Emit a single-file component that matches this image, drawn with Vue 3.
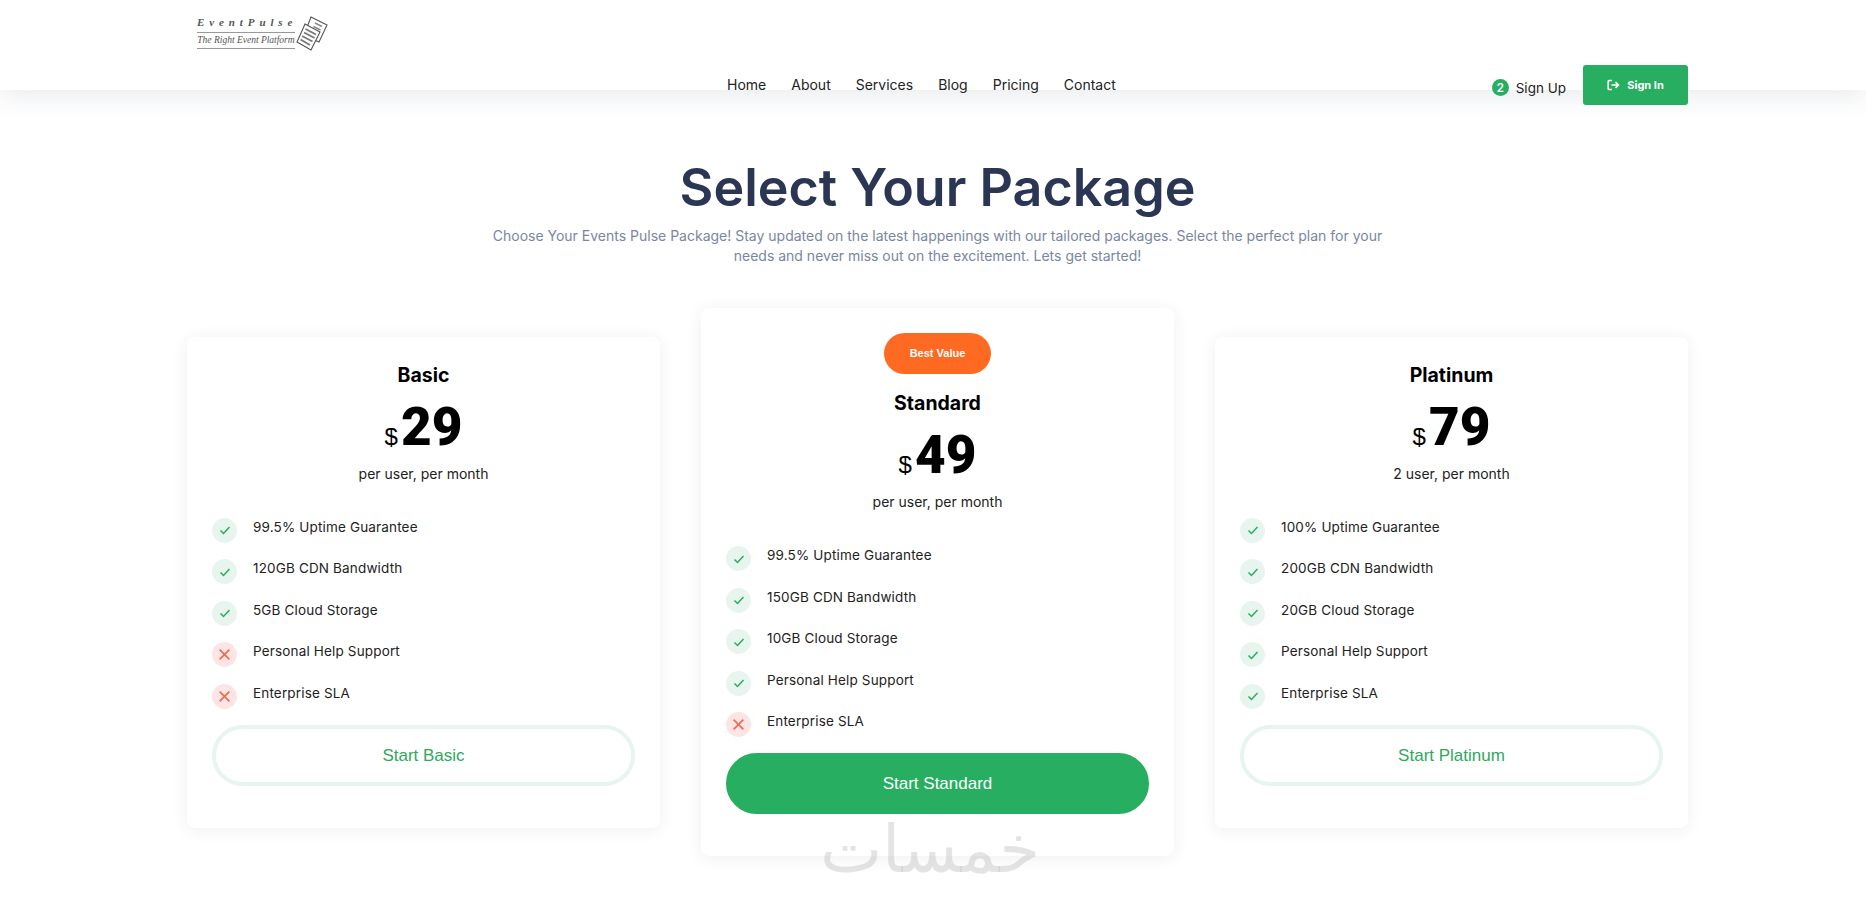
<template>
  <div class="page">
    <header class="site-header">
      <div class="header-inner">
        <a class="logo" href="#">
          <div class="logo-text">
            <div class="logo-name">EventPulse</div>
            <div class="logo-tag">The Right Event Platform</div>
          </div>
          <svg class="logo-tickets" viewBox="0 0 32 36" fill="none" stroke="#555" stroke-width="1.1">
            <path d="M15 2 31 10 23 27 8 20z" fill="#fff" />
            <path d="M19 8l7 3.500M17.500 11.500l7 3.500" stroke="#888" stroke-width="1.500" />
            <path d="M9 9 24 17 15 35 1 27z" fill="#fff" />
            <path d="M9.500 14 20 19.500M8 17.500 18.500 23M6 21l10.500 5.500M4.500 24.500 14 30" stroke="#777" stroke-width="1.700" />
          </svg>
        </a>
        <nav class="main-nav">
          <a v-for="link in links" :key="link" href="#">{{ link }}</a>
        </nav>
        <div class="account">
          <a class="sign-up" href="#"><span class="step">2</span>Sign Up</a>
          <a class="sign-in" href="#">
            <svg viewBox="0 0 16 14" width="13" height="12" fill="none" stroke="#fff" stroke-width="2">
              <path d="M6 1.500H2.500a1 1 0 0 0-1 1v9a1 1 0 0 0 1 1H6" />
              <path d="M5.500 7H14M10.500 3.500 14 7l-3.500 3.500" />
            </svg>
            Sign In
          </a>
        </div>
      </div>
    </header>

    <main class="pricing">
      <h1>Select Your Package</h1>
      <p class="intro">
        Choose Your Events Pulse Package! Stay updated on the latest happenings with our tailored packages. Select the perfect plan for your needs and never miss out on the excitement. Lets get started!
      </p>

      <div class="plans">
        <article v-for="plan in plans" :key="plan.name" class="plan" :class="{ featured: plan.featured }">
          <span v-if="plan.featured" class="badge">Best Value</span>
          <h2>{{ plan.name }}</h2>
          <div class="price"><span class="currency">$</span>{{ plan.price }}</div>
          <p class="period">{{ plan.period }}</p>
          <ul>
            <li v-for="item in plan.items" :key="item.label">
              <span class="mark" :class="item.on ? 'yes' : 'no'">
                <svg v-if="item.on" viewBox="0 0 12 12" width="12" height="12" fill="none" stroke="#27ae60" stroke-width="1.500">
                  <path d="M1.500 6.500 4.500 9.500 10.500 3" />
                </svg>
                <svg v-else viewBox="0 0 12 12" width="13" height="13" fill="none" stroke="#f4664a" stroke-width="1.400">
                  <path d="M1.500 1.500 10.500 10.500M10.500 1.500 1.500 10.500" />
                </svg>
              </span>
              {{ item.label }}
            </li>
          </ul>
          <a class="start" href="#">Start {{ plan.name }}</a>
        </article>
      </div>
    </main>

    <div class="watermark" lang="ar" dir="rtl">خمسات</div>
  </div>
</template>

<script setup>
const links = ['Home', 'About', 'Services', 'Blog', 'Pricing', 'Contact']

const features = (uptime, cdn, storage, on) => [
  { label: `${uptime} Uptime Guarantee`, on: true },
  { label: `${cdn} CDN Bandwidth`, on: true },
  { label: `${storage} Cloud Storage`, on: true },
  { label: 'Personal Help Support', on: on > 3 },
  { label: 'Enterprise SLA', on: on > 4 },
]

const plans = [
  { name: 'Basic', price: 29, period: 'per user, per month', items: features('99.5%', '120GB', '5GB', 3) },
  { name: 'Standard', price: 49, period: 'per user, per month', featured: true, items: features('99.5%', '150GB', '10GB', 4) },
  { name: 'Platinum', price: 79, period: '2 user, per month', items: features('100%', '200GB', '20GB', 5) },
]
</script>

<style>
html,
body {
  background: #fff;
}
</style>

<style scoped>
.page {
  position: relative;
  height: 901px;
  overflow: hidden;
  font-family: Inter, "Liberation Sans", sans-serif;
  color: #111;
}

a {
  color: inherit;
  text-decoration: none;
}

.site-header {
  height: 90px;
  padding-left: 9px;
  background: #fff;
  box-shadow: 0 6px 26px rgba(43, 54, 84, 0.1);
}

.header-inner {
  width: 1501px;
  margin: 0 auto;
  display: flex;
  align-items: flex-start;
}

.logo {
  width: 540px;
  padding: 12px 0 0 10px;
  display: flex;
  align-items: flex-start;
  box-sizing: border-box;
}

.logo-text {
  width: 98px;
}

.logo-name {
  font-family: "Liberation Serif", serif;
  font-style: italic;
  font-weight: 700;
  font-size: 11px;
  letter-spacing: 4.900px;
  line-height: 20px;
  color: #555;
  white-space: nowrap;
  border-bottom: 1px solid #999;
}

.logo-tag {
  font-family: "Liberation Serif", serif;
  font-style: italic;
  font-size: 9.500px;
  line-height: 15px;
  text-align: center;
  color: #555;
  white-space: nowrap;
  border-bottom: 1px solid #999;
}

.logo-tickets {
  width: 32px;
  height: 36px;
  margin: 3px 0 0 1px;
}

.main-nav {
  display: flex;
  gap: 25px;
  padding-top: 75px;
  font-size: 14px;
  line-height: 20px;
  color: #222;
}

.account {
  margin-left: auto;
  padding-top: 65px;
  display: flex;
  align-items: center;
  gap: 17px;
}

.sign-up {
  display: flex;
  align-items: center;
  gap: 7px;
  font-size: 13.500px;
  color: #222;
  padding-top: 5px;
}

.step {
  width: 17px;
  height: 17px;
  border-radius: 50%;
  background: #27ae60;
  color: #fff;
  font-size: 12px;
  font-weight: 600;
  display: flex;
  align-items: center;
  justify-content: center;
}

.sign-in {
  width: 105px;
  height: 40px;
  border-radius: 3px;
  background: #27ae60;
  color: #fff;
  font-size: 11px;
  font-weight: 700;
  display: flex;
  align-items: center;
  justify-content: center;
  gap: 7px;
}

.pricing {
  padding: 66px 0 0 9px;
  text-align: center;
}

h1 {
  margin: 0;
  font-size: 52px;
  line-height: 64px;
  font-weight: 600;
  color: #2b3654;
}

.intro {
  width: 910px;
  margin: 6px auto 0;
  font-size: 14px;
  line-height: 20px;
  color: #7a86a1;
}

.plans {
  width: 1501px;
  margin: 0 auto;
  padding-top: 42px;
  display: flex;
  justify-content: space-between;
  align-items: center;
}

.plan {
  width: 473px;
  box-sizing: border-box;
  padding: 26px 25px 42px;
  background: #fff;
  border-radius: 8px;
  box-shadow: 0 2px 16px rgba(43, 54, 84, 0.08);
}

.badge {
  display: block;
  width: 107px;
  height: 41px;
  margin: -1px auto 17px;
  border-radius: 21px;
  background: #ff6a22;
  color: #fff;
  font-family: "Liberation Sans", sans-serif;
  font-size: 11px;
  font-weight: 700;
  line-height: 41px;
}

h2 {
  margin: 0;
  font-size: 19.500px;
  line-height: 24px;
  font-weight: 700;
  color: #000;
}

.price {
  margin-top: 9px;
  font-family: Roboto, "Liberation Sans", sans-serif;
  font-size: 53px;
  line-height: 62px;
  font-weight: 900;
  color: #000;
}

.currency {
  margin-right: 3px;
  font-family: "Liberation Sans", sans-serif;
  font-size: 24px;
  font-weight: 400;
}

.period {
  margin: -4px 0 0;
  font-size: 14px;
  line-height: 20px;
  color: #222;
}

ul {
  list-style: none;
  margin: 34px 0 0;
  padding: 0;
  display: flex;
  flex-direction: column;
  gap: 16.600px;
}

li {
  display: flex;
  align-items: flex-start;
  gap: 16px;
  height: 25px;
  font-size: 13.500px;
  letter-spacing: 0.16px;
  line-height: 19px;
  color: #222;
  text-align: left;
}

.mark {
  flex: none;
  width: 25px;
  height: 25px;
  border-radius: 50%;
  display: flex;
  align-items: center;
  justify-content: center;
}

.mark.yes {
  background: #e7f5ee;
}

.mark.no {
  background: #fde5e5;
}

.start {
  display: block;
  height: 61px;
  margin-top: 16px;
  box-sizing: border-box;
  border: 4px solid #e7f5ee;
  border-radius: 31px;
  color: #2fa85f;
  font-family: "Liberation Sans", sans-serif;
  font-size: 17px;
  line-height: 53px;
}

.featured .start {
  background: #27ae60;
  border-color: #27ae60;
  color: #fff;
}

.watermark {
  position: absolute;
  left: 812px;
  top: 810px;
  width: 236px;
  font-family: "DejaVu Sans", sans-serif;
  font-size: 66px;
  line-height: 80px;
  font-weight: 400;
  text-align: center;
  color: rgba(170, 170, 170, 0.32);
}
</style>
